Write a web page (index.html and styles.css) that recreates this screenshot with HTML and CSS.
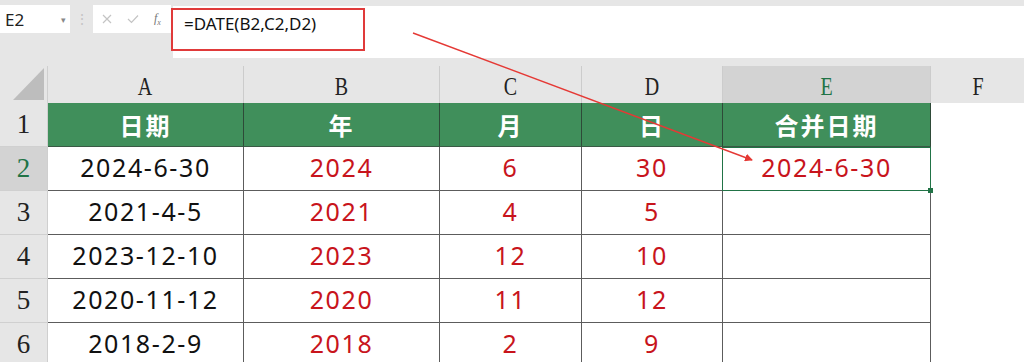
FILE: index.html
```html
<!DOCTYPE html>
<html lang="zh-CN">
<head>
    <meta charset="UTF-8">
    <title>DATE 合并日期</title>
    <link rel="stylesheet" href="styles.css">
</head>
<body>
    <div class="formula-bar">
        <div class="name-box">
            <span>E2</span>
            <span class="drop">&#9662;</span>
        </div>
        <div class="dots">&#8942;</div>
        <div class="fx-box">
            <svg width="10" height="10" viewBox="0 0 10 10"><path d="M1 1 L9 9 M9 1 L1 9" stroke="#c4c4c4" stroke-width="1.2" fill="none"/></svg>
            <svg width="12" height="10" viewBox="0 0 12 10"><path d="M1 5 L4.5 8.5 L11 1.5" stroke="#c4c4c4" stroke-width="1.2" fill="none"/></svg>
            <span class="fx">f<sub>x</sub></span>
        </div>
        <div class="formula-input">
            <div class="formula-text">=DATE(B2,C2,D2)</div>
        </div>
    </div>
    <div class="gap"></div>

    <div class="sheet">
        <div class="corner"><div class="tri"></div></div>
        <div class="col-head"><span>A</span></div>
        <div class="col-head"><span>B</span></div>
        <div class="col-head"><span>C</span></div>
        <div class="col-head"><span>D</span></div>
        <div class="col-head active"><span>E</span></div>
        <div class="col-head last"><span>F</span></div>

        <div class="row-head">1</div>
        <div class="th">日期</div>
        <div class="th">年</div>
        <div class="th">月</div>
        <div class="th">日</div>
        <div class="th">合并日期</div>
        <div class="blank"></div>

        <div class="row-head active">2</div>
        <div class="td">2024-6-30</div>
        <div class="td red">2024</div>
        <div class="td red">6</div>
        <div class="td red">30</div>
        <div class="td red selected">2024-6-30<i class="handle"></i></div>
        <div class="blank"></div>

        <div class="row-head">3</div>
        <div class="td">2021-4-5</div>
        <div class="td red">2021</div>
        <div class="td red">4</div>
        <div class="td red">5</div>
        <div class="td"></div>
        <div class="blank"></div>

        <div class="row-head">4</div>
        <div class="td">2023-12-10</div>
        <div class="td red">2023</div>
        <div class="td red">12</div>
        <div class="td red">10</div>
        <div class="td"></div>
        <div class="blank"></div>

        <div class="row-head">5</div>
        <div class="td">2020-11-12</div>
        <div class="td red">2020</div>
        <div class="td red">11</div>
        <div class="td red">12</div>
        <div class="td"></div>
        <div class="blank"></div>

        <div class="row-head">6</div>
        <div class="td">2018-2-9</div>
        <div class="td red">2018</div>
        <div class="td red">2</div>
        <div class="td red">9</div>
        <div class="td"></div>
        <div class="blank"></div>
    </div>

    <!-- arrow annotation from the formula to E2 -->
    <svg class="arrow" width="1024" height="362" viewBox="0 0 1024 362">
        <defs>
            <marker id="head" markerWidth="8" markerHeight="8" refX="7" refY="4" orient="auto" markerUnits="userSpaceOnUse">
                <path d="M0 0 L8 4 L0 8 Z" fill="#e53935"/>
            </marker>
        </defs>
        <line x1="413" y1="33" x2="752" y2="160" stroke="#e53935" stroke-width="1.4" marker-end="url(#head)"/>
    </svg>
</body>
</html>
```

FILE: styles.css
```css
body {
    margin: 0;
    width: 1024px;
    height: 362px;
    overflow: hidden;
    background: #fff;
    font-family: "Noto Sans", "Noto Sans CJK SC", sans-serif;
    position: relative;
}
.formula-bar {
    display: flex;
    align-items: flex-start;
    height: 57px;
    padding-top: 5px;
    box-sizing: border-box;
    background: #e6e6e6;
}
.name-box {
    width: 70px;
    height: 28px;
    background: #fff;
    display: flex;
    align-items: center;
    justify-content: space-between;
    padding: 0 4px 0 5px;
    box-sizing: border-box;
    font-size: 17px;
    color: #222;
}
.drop {
    font-size: 9px;
    color: #888;
}
.dots {
    width: 23px;
    text-align: center;
    color: #c4c4c4;
    font-size: 14px;
    line-height: 28px;
}
.fx-box {
    width: 78px;
    height: 28px;
    background: #fff;
    display: flex;
    align-items: center;
    gap: 15px;
    padding-left: 9px;
    box-sizing: border-box;
}
.fx {
    font-family: "Liberation Serif", serif;
    font-style: italic;
    font-size: 12px;
    color: #777;
}
.fx sub {
    font-size: 8px;
}
.formula-input {
    flex: 1;
    height: 52px;
    margin-top: 1px;
    margin-left: 2px;
    background: #fff;
}
.formula-text {
    width: 194px;
    height: 43px;
    margin-left: -2px;
    margin-top: 2px;
    border: 2px solid #e03a3a;
    box-sizing: border-box;
    padding: 2px 0 0 11px;
    font-size: 17px;
    color: #111;
}
.gap {
    height: 9px;
    background: #e6e6e6;
}
.sheet {
    display: grid;
    grid-template-columns: 48px 196px 196px 142px 141px 208px 1fr;
    grid-template-rows: 37px repeat(6, 44px);
}
.corner {
    background: #e6e6e6;
    border-right: 1px solid #cfcfcf;
    position: relative;
}
.tri {
    position: absolute;
    right: 3px;
    bottom: 3px;
    width: 0;
    height: 0;
    border-left: 31px solid transparent;
    border-bottom: 32px solid #bdbdbd;
}
.col-head {
    background: #e6e6e6;
    border-right: 1px solid #cccccc;
    display: flex;
    justify-content: center;
    align-items: center;
    padding-top: 5px;
    box-sizing: border-box;
    font-family: "Liberation Serif", serif;
    font-size: 25px;
    color: #222;
}
.col-head span {
    display: inline-block;
    transform: scaleX(0.8);
}
.col-head.active {
    background: #d3d3d3;
    color: #217346;
}
.col-head.last {
    border-right: none;
}
.row-head {
    background: #e6e6e6;
    border-right: 1px solid #cfcfcf;
    border-bottom: 1px solid #d0d0d0;
    box-sizing: border-box;
    display: flex;
    justify-content: center;
    align-items: center;
    font-family: "Liberation Serif", serif;
    font-size: 27px;
    color: #222;
}
.row-head.active {
    background: #d3d3d3;
    color: #217346;
}
.th {
    background: #408f5b;
    color: #fff;
    font-family: "Noto Sans CJK SC", sans-serif;
    font-weight: bold;
    font-size: 24px;
    letter-spacing: 2px;
    display: flex;
    justify-content: center;
    align-items: center;
    border-right: 1px solid #2e4a38;
    border-bottom: 1px solid #3a5a45;
    box-sizing: border-box;
}
.td {
    border-right: 1px solid #5c5c5c;
    border-bottom: 1px solid #5c5c5c;
    box-sizing: border-box;
    display: flex;
    justify-content: center;
    align-items: center;
    padding-bottom: 4px;
    font-size: 25px;
    letter-spacing: 1.6px;
    color: #111;
}
.td.red {
    color: #c8141c;
}
.td.selected {
    border: 1px solid #217346;
    margin-left: -1px;
    position: relative;
}
.handle {
    position: absolute;
    right: -3px;
    bottom: -3px;
    width: 5px;
    height: 5px;
    background: #217346;
}
.blank {
    background: #fff;
}
.arrow {
    position: absolute;
    left: 0;
    top: 0;
    pointer-events: none;
}
```
